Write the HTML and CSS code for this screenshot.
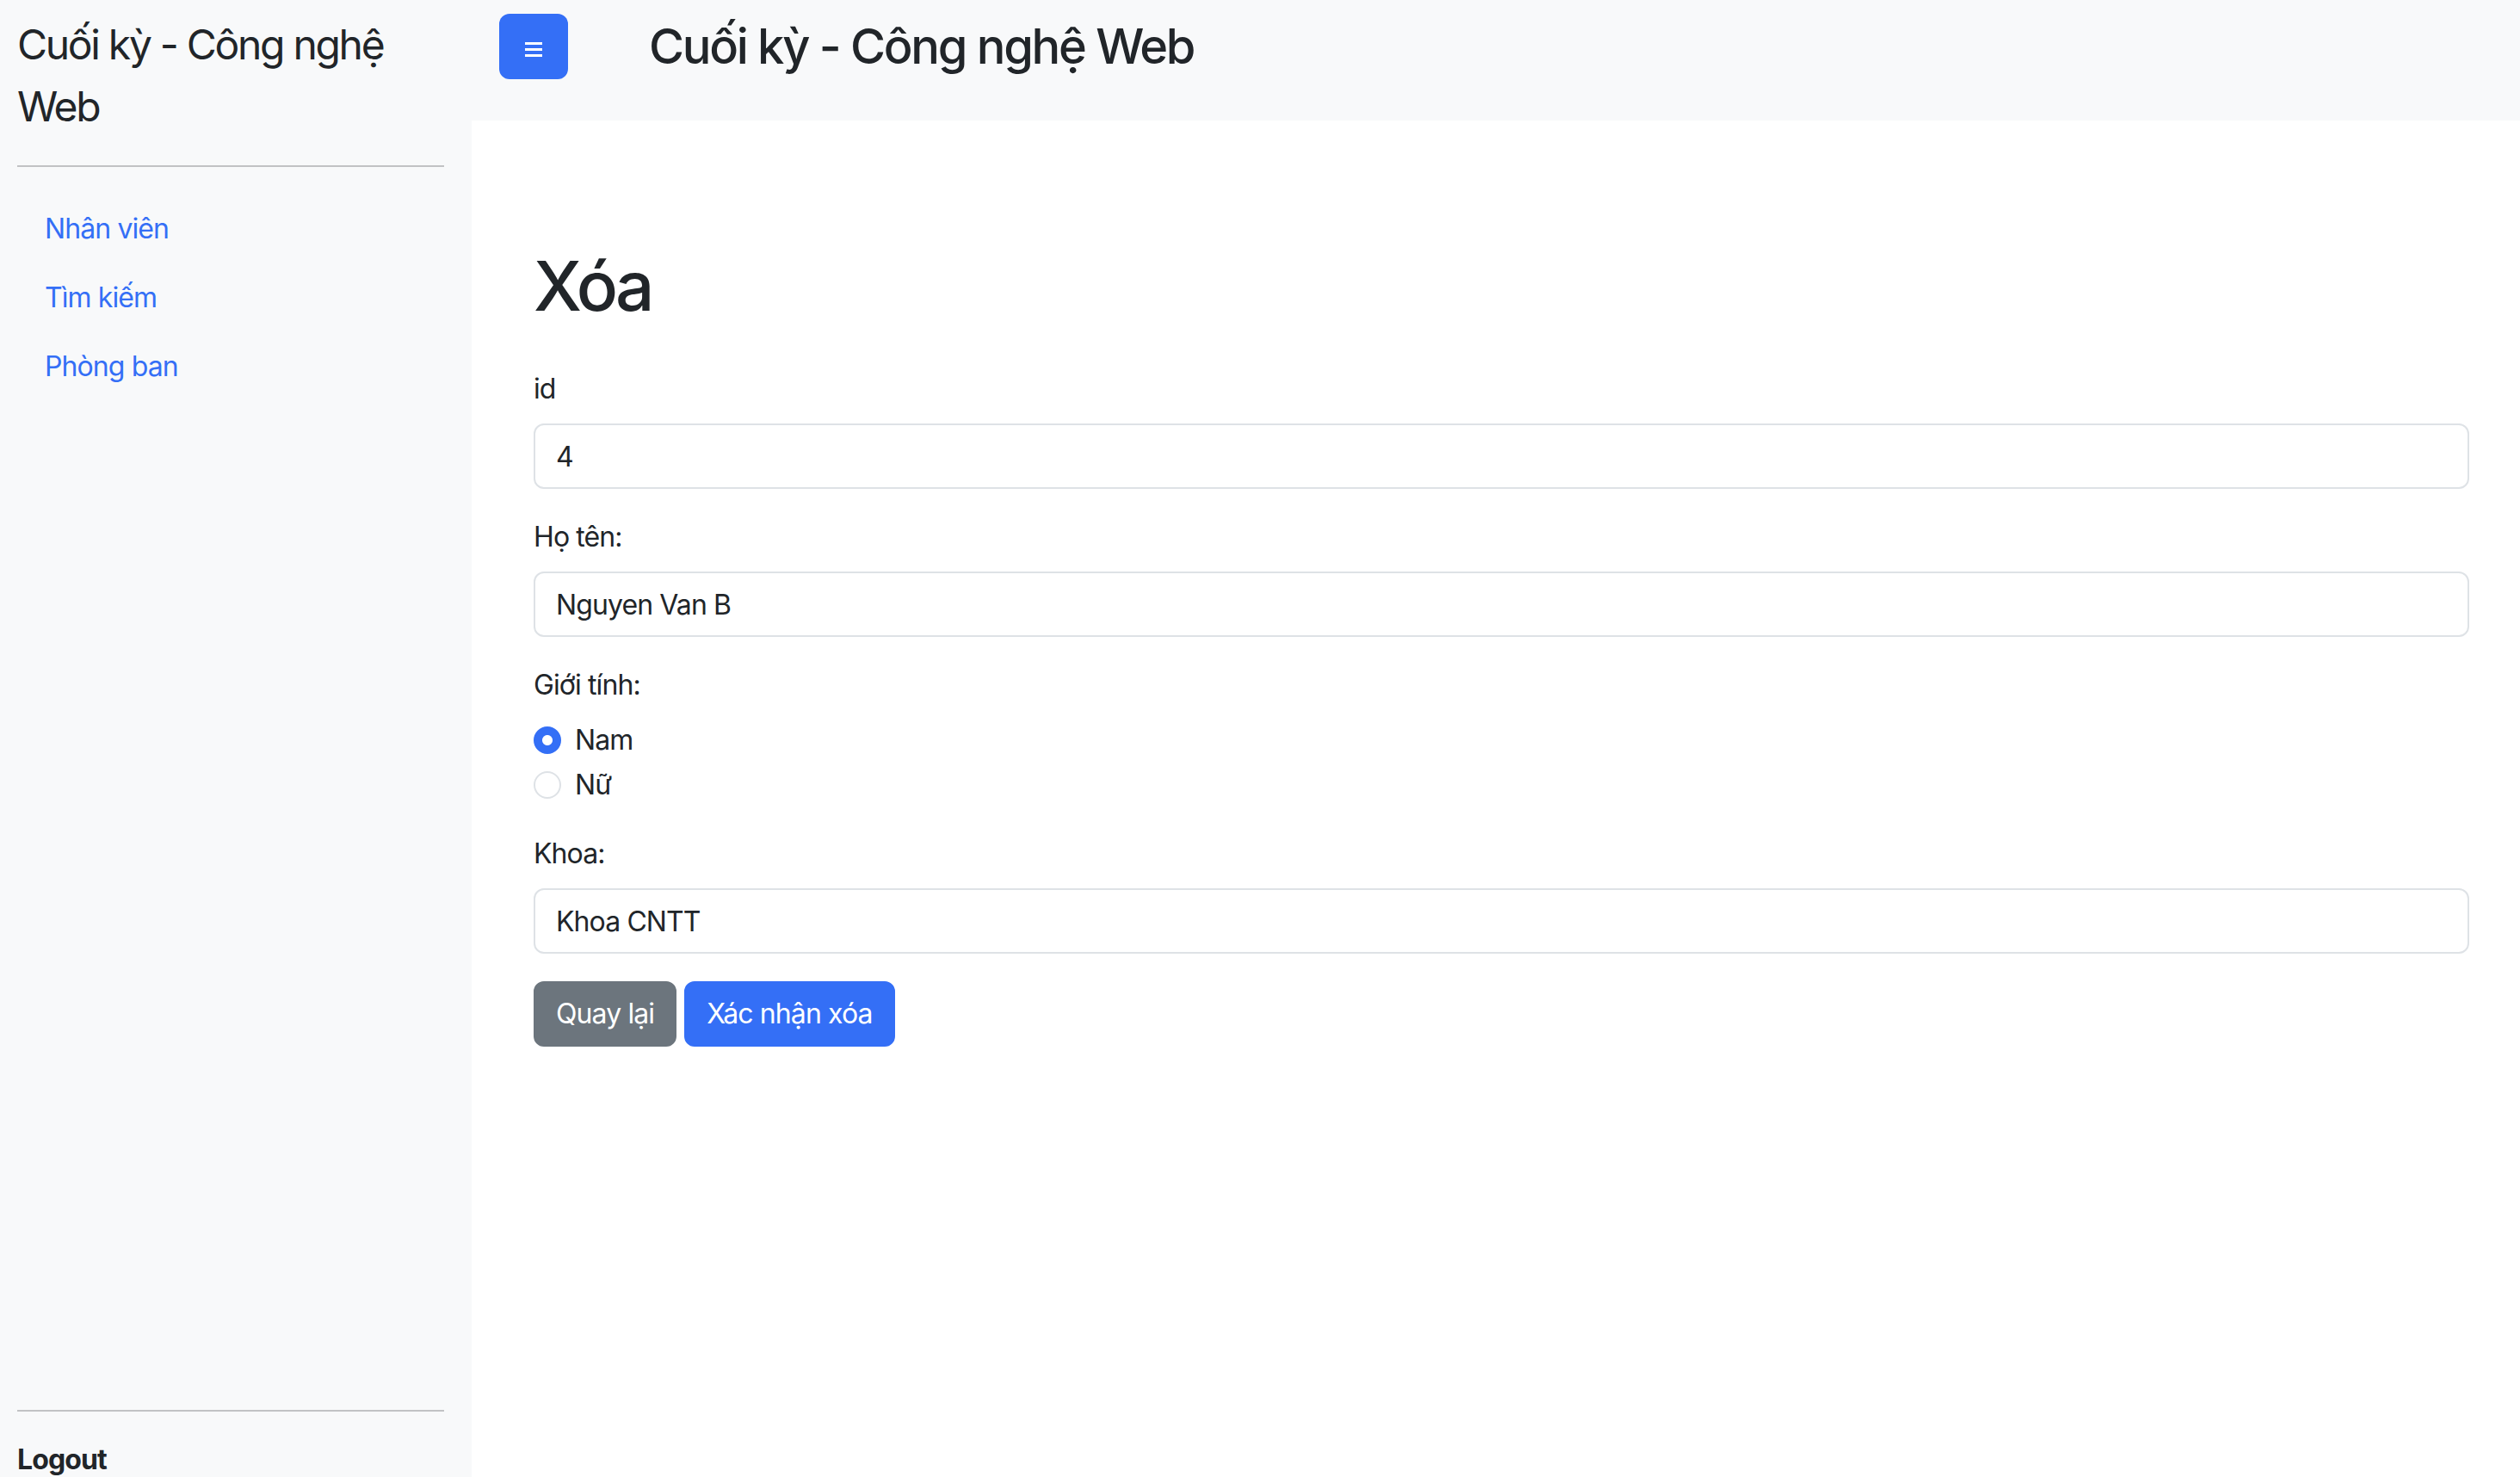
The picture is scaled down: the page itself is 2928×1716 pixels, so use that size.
FILE: index.html
```html
<!DOCTYPE html>
<html lang="vi">
<head>
<meta charset="utf-8">
<title>Xóa</title>
<link rel="stylesheet" href="styles.css">
</head>
<body>
<div class="layout">
  <aside class="sidebar">
    <div class="brand">Cuối kỳ - Công nghệ Web</div>
    <hr class="divider">
    <nav class="side-nav">
      <a class="nav-link" href="#">Nhân viên</a>
      <a class="nav-link" href="#">Tìm kiếm</a>
      <a class="nav-link" href="#">Phòng ban</a>
    </nav>
    <div class="sidebar-bottom">
      <hr class="divider">
      <div class="logout">Logout</div>
    </div>
  </aside>
  <div class="main">
    <header class="topbar">
      <button class="toggle-btn" type="button" aria-label="Menu">
        <svg class="toggle-icon" width="20" height="17" viewBox="0 0 20 17"><rect x="0" y="0" width="20" height="3" fill="#fff"/><rect x="0" y="7" width="20" height="3" fill="#fff"/><rect x="0" y="14" width="20" height="3" fill="#fff"/></svg>
      </button>
      <h3 class="page-title">Cuối kỳ - Công nghệ Web</h3>
    </header>
    <section class="content">
      <h1 class="heading">Xóa</h1>
      <form class="form">
        <div class="field">
          <label class="form-label">id</label>
          <input class="form-control" type="text" value="4">
        </div>
        <div class="field">
          <label class="form-label">Họ tên:</label>
          <input class="form-control" type="text" value="Nguyen Van B">
        </div>
        <div class="field">
          <label class="form-label">Giới tính:</label>
          <div class="form-check">
            <input class="radio" type="radio" name="gt" checked>
            <span class="check-label">Nam</span>
          </div>
          <div class="form-check">
            <input class="radio" type="radio" name="gt">
            <span class="check-label">Nữ</span>
          </div>
        </div>
        <div class="field">
          <label class="form-label">Khoa:</label>
          <input class="form-control" type="text" value="Khoa CNTT">
        </div>
        <div class="actions">
          <a class="btn btn-secondary" href="#">Quay lại</a>
          <button class="btn btn-primary" type="button">Xác nhận xóa</button>
        </div>
      </form>
    </section>
  </div>
</div>
</body>
</html>
```
FILE: styles.css
```css
html, body {
  margin: 0;
  padding: 0;
  height: 100%;
  overflow: hidden;
}
body {
  font-family: Inter, "Noto Sans", sans-serif;
  font-size: 32px;
  line-height: 48px;
  letter-spacing: -0.9px;
  color: #212529;
  background: #fff;
}
.layout {
  display: flex;
  min-height: 100vh;
}
.sidebar {
  width: 548px;
  flex: none;
  box-sizing: border-box;
  height: calc(100vh + 4px);
  background: #f8f9fa;
  padding: 16px 32px 0 20px;
  display: flex;
  flex-direction: column;
}
.brand {
  font-size: 48px;
  line-height: 72px;
  letter-spacing: -2.3px;
}
.divider {
  border: 0;
  border-top: 2px solid #c1c2c4;
  margin: 32px 0;
  height: 0;
}
.side-nav {
  display: flex;
  flex-direction: column;
}
.nav-link {
  display: block;
  padding: 16px 32px;
  color: #346ff6;
  text-decoration: none;
}
.sidebar-bottom {
  margin-top: auto;
}
.logout {
  font-weight: 700;
}
.main {
  flex: 1;
  display: flex;
  flex-direction: column;
  background: #fff;
}
.topbar {
  height: 140px;
  box-sizing: border-box;
  background: #f8f9fa;
  padding: 16px 32px 48px;
  display: flex;
  align-items: center;
}
.toggle-btn {
  width: 80px;
  height: 76px;
  border: 0;
  border-radius: 12px;
  background: #346ff6;
  padding: 0;
  display: flex;
  align-items: center;
  justify-content: center;
}
.toggle-icon {
  display: block;
  margin-top: 7px;
}
.page-title {
  margin: 0 0 0 94px;
  font-size: 56px;
  line-height: 67px;
  font-weight: 500;
  letter-spacing: -2.3px;
}
.content {
  padding: 144px 59px 0 72px;
}
.heading {
  margin: 0 0 48px;
  font-size: 80px;
  line-height: 96px;
  font-weight: 500;
  letter-spacing: -4px;
}
.form {
  margin: 0;
}
.field {
  margin-bottom: 32px;
}
.form-label {
  display: block;
  margin-bottom: 16px;
}
.form-control {
  display: block;
  width: 100%;
  box-sizing: border-box;
  height: 76px;
  padding: 12px 24px;
  border: 2px solid #dee2e6;
  border-radius: 12px;
  font-family: inherit;
  font-size: 32px;
  line-height: 48px;
  letter-spacing: -0.9px;
  color: #212529;
  background: #fff;
  outline: none;
}
.form-check {
  display: flex;
  align-items: flex-start;
  gap: 16px;
  min-height: 48px;
  margin-bottom: 4px;
}
.radio {
  appearance: none;
  -webkit-appearance: none;
  width: 32px;
  height: 32px;
  margin: 8px 0 0;
  box-sizing: border-box;
  border: 2px solid #dee2e6;
  border-radius: 50%;
  background: #fff;
  flex: none;
}
.radio:checked {
  border-color: #346ff6;
  background: radial-gradient(circle, #fff 0, #fff 5.5px, #346ff6 6.5px);
}
.actions {
  display: flex;
  gap: 9px;
}
.btn {
  display: inline-block;
  box-sizing: border-box;
  height: 76px;
  padding: 12px 24px;
  border: 2px solid transparent;
  border-radius: 12px;
  font-family: inherit;
  font-size: 32px;
  line-height: 48px;
  letter-spacing: -0.9px;
  color: #fff;
  text-decoration: none;
  cursor: pointer;
}
.btn-secondary {
  background: #6c757d;
  border-color: #6c757d;
}
.btn-primary {
  background: #346ff6;
  border-color: #346ff6;
}
```
